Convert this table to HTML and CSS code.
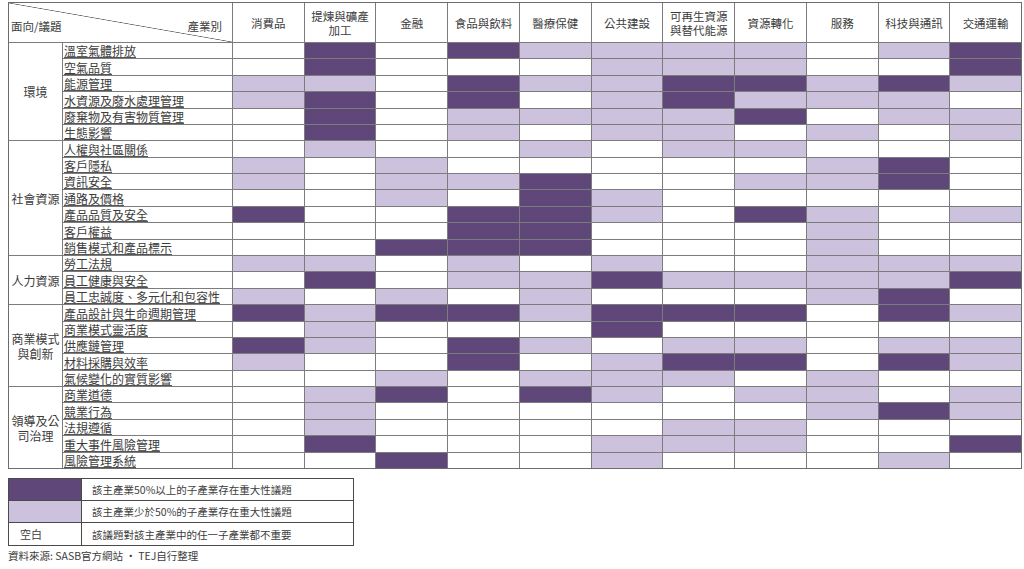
FILE: index.html
```html
<!DOCTYPE html>
<html lang="zh-Hant">
<head>
<meta charset="utf-8">
<title>SASB 重大性議題矩陣</title>
<link rel="stylesheet" href="styles.css">
</head>
<body>
<div class="page">
  <div class="matrix">
    <div class="corner"><span>面向/議題</span><span>產業別</span></div>
    <div class="h">消費品</div>
    <div class="h">提煉與礦產<br>加工</div>
    <div class="h">金融</div>
    <div class="h">食品與飲料</div>
    <div class="h">醫療保健</div>
    <div class="h">公共建設</div>
    <div class="h">可再生資源<br>與替代能源</div>
    <div class="h">資源轉化</div>
    <div class="h">服務</div>
    <div class="h">科技與通訊</div>
    <div class="h">交通運輸</div>

    <div class="cat span6">環境</div>
    <div class="t"><span>溫室氣體排放</span></div>
    <div class="w"></div><div class="d"></div><div class="w"></div><div class="d"></div><div class="l"></div><div class="l"></div><div class="l"></div><div class="l"></div><div class="w"></div><div class="l"></div><div class="d"></div>
    <div class="t"><span>空氣品質</span></div>
    <div class="w"></div><div class="d"></div><div class="w"></div><div class="w"></div><div class="w"></div><div class="l"></div><div class="l"></div><div class="l"></div><div class="w"></div><div class="w"></div><div class="d"></div>
    <div class="t"><span>能源管理</span></div>
    <div class="l"></div><div class="l"></div><div class="w"></div><div class="d"></div><div class="l"></div><div class="l"></div><div class="d"></div><div class="d"></div><div class="l"></div><div class="d"></div><div class="l"></div>
    <div class="t"><span>水資源及廢水處理管理</span></div>
    <div class="l"></div><div class="d"></div><div class="w"></div><div class="d"></div><div class="w"></div><div class="l"></div><div class="d"></div><div class="l"></div><div class="l"></div><div class="l"></div><div class="w"></div>
    <div class="t"><span>廢棄物及有害物質管理</span></div>
    <div class="w"></div><div class="d"></div><div class="w"></div><div class="l"></div><div class="l"></div><div class="l"></div><div class="l"></div><div class="d"></div><div class="w"></div><div class="l"></div><div class="l"></div>
    <div class="t"><span>生態影響</span></div>
    <div class="w"></div><div class="d"></div><div class="w"></div><div class="l"></div><div class="w"></div><div class="l"></div><div class="l"></div><div class="w"></div><div class="l"></div><div class="w"></div><div class="l"></div>

    <div class="cat span7">社會資源</div>
    <div class="t"><span>人權與社區關係</span></div>
    <div class="w"></div><div class="l"></div><div class="w"></div><div class="w"></div><div class="l"></div><div class="w"></div><div class="l"></div><div class="l"></div><div class="w"></div><div class="w"></div><div class="w"></div>
    <div class="t"><span>客戶隱私</span></div>
    <div class="l"></div><div class="w"></div><div class="l"></div><div class="w"></div><div class="w"></div><div class="w"></div><div class="w"></div><div class="w"></div><div class="l"></div><div class="d"></div><div class="w"></div>
    <div class="t"><span>資訊安全</span></div>
    <div class="l"></div><div class="w"></div><div class="l"></div><div class="l"></div><div class="d"></div><div class="w"></div><div class="w"></div><div class="l"></div><div class="l"></div><div class="d"></div><div class="w"></div>
    <div class="t"><span>通路及價格</span></div>
    <div class="w"></div><div class="w"></div><div class="l"></div><div class="w"></div><div class="d"></div><div class="l"></div><div class="w"></div><div class="w"></div><div class="w"></div><div class="w"></div><div class="w"></div>
    <div class="t"><span>產品品質及安全</span></div>
    <div class="d"></div><div class="w"></div><div class="w"></div><div class="d"></div><div class="d"></div><div class="l"></div><div class="w"></div><div class="d"></div><div class="l"></div><div class="w"></div><div class="l"></div>
    <div class="t"><span>客戶權益</span></div>
    <div class="w"></div><div class="w"></div><div class="w"></div><div class="d"></div><div class="d"></div><div class="w"></div><div class="w"></div><div class="w"></div><div class="l"></div><div class="w"></div><div class="w"></div>
    <div class="t"><span>銷售模式和產品標示</span></div>
    <div class="w"></div><div class="w"></div><div class="d"></div><div class="d"></div><div class="d"></div><div class="w"></div><div class="w"></div><div class="w"></div><div class="l"></div><div class="w"></div><div class="w"></div>

    <div class="cat span3">人力資源</div>
    <div class="t"><span>勞工法規</span></div>
    <div class="l"></div><div class="l"></div><div class="w"></div><div class="l"></div><div class="w"></div><div class="l"></div><div class="w"></div><div class="w"></div><div class="l"></div><div class="l"></div><div class="l"></div>
    <div class="t"><span>員工健康與安全</span></div>
    <div class="w"></div><div class="d"></div><div class="w"></div><div class="l"></div><div class="l"></div><div class="d"></div><div class="l"></div><div class="l"></div><div class="l"></div><div class="l"></div><div class="d"></div>
    <div class="t"><span>員工忠誠度、多元化和包容性</span></div>
    <div class="l"></div><div class="w"></div><div class="l"></div><div class="w"></div><div class="l"></div><div class="w"></div><div class="w"></div><div class="w"></div><div class="l"></div><div class="d"></div><div class="w"></div>

    <div class="cat span5">商業模式<br>與創新</div>
    <div class="t"><span>產品設計與生命週期管理</span></div>
    <div class="d"></div><div class="l"></div><div class="d"></div><div class="d"></div><div class="l"></div><div class="d"></div><div class="d"></div><div class="d"></div><div class="w"></div><div class="d"></div><div class="l"></div>
    <div class="t"><span>商業模式靈活度</span></div>
    <div class="w"></div><div class="l"></div><div class="w"></div><div class="w"></div><div class="w"></div><div class="d"></div><div class="w"></div><div class="w"></div><div class="w"></div><div class="w"></div><div class="w"></div>
    <div class="t"><span>供應鏈管理</span></div>
    <div class="d"></div><div class="l"></div><div class="w"></div><div class="d"></div><div class="l"></div><div class="w"></div><div class="l"></div><div class="l"></div><div class="w"></div><div class="l"></div><div class="l"></div>
    <div class="t"><span>材料採購與效率</span></div>
    <div class="l"></div><div class="w"></div><div class="w"></div><div class="d"></div><div class="w"></div><div class="l"></div><div class="d"></div><div class="d"></div><div class="w"></div><div class="d"></div><div class="l"></div>
    <div class="t"><span>氣候變化的實質影響</span></div>
    <div class="w"></div><div class="w"></div><div class="l"></div><div class="w"></div><div class="l"></div><div class="l"></div><div class="l"></div><div class="w"></div><div class="l"></div><div class="w"></div><div class="w"></div>

    <div class="cat span5">領導及公<br>司治理</div>
    <div class="t"><span>商業道德</span></div>
    <div class="w"></div><div class="l"></div><div class="d"></div><div class="w"></div><div class="d"></div><div class="l"></div><div class="w"></div><div class="l"></div><div class="l"></div><div class="w"></div><div class="l"></div>
    <div class="t"><span>競業行為</span></div>
    <div class="w"></div><div class="l"></div><div class="w"></div><div class="w"></div><div class="w"></div><div class="w"></div><div class="w"></div><div class="w"></div><div class="l"></div><div class="d"></div><div class="l"></div>
    <div class="t"><span>法規遵循</span></div>
    <div class="w"></div><div class="l"></div><div class="w"></div><div class="w"></div><div class="w"></div><div class="w"></div><div class="l"></div><div class="l"></div><div class="w"></div><div class="w"></div><div class="w"></div>
    <div class="t"><span>重大事件風險管理</span></div>
    <div class="w"></div><div class="d"></div><div class="w"></div><div class="w"></div><div class="w"></div><div class="l"></div><div class="l"></div><div class="l"></div><div class="w"></div><div class="w"></div><div class="d"></div>
    <div class="t"><span>風險管理系統</span></div>
    <div class="w"></div><div class="w"></div><div class="d"></div><div class="w"></div><div class="w"></div><div class="l"></div><div class="w"></div><div class="w"></div><div class="w"></div><div class="l"></div><div class="w"></div>
  </div>

  <div class="legend">
    <div class="d"></div>
    <div class="lt">該主產業50%以上的子產業存在重大性議題</div>
    <div class="l"></div>
    <div class="lt">該主產業少於50%的子產業存在重大性議題</div>
    <div class="lk">空白</div>
    <div class="lt">該議題對該主產業中的任一子產業都不重要</div>
  </div>

  <div class="source">資料來源: SASB官方網站 · TEJ自行整理</div>
</div>
</body>
</html>
```

FILE: styles.css
```css
* { box-sizing: border-box; }

html, body {
  margin: 0;
  padding: 0;
  background: #ffffff;
}

body {
  font-family: "Noto Sans CJK TC", "Noto Sans CJK SC", "Noto Sans", sans-serif;
  color: #3c3c3c;
}

.page {
  padding: 2px 0 0 8px;
}

.matrix {
  display: grid;
  grid-template-columns: 53px 169px repeat(11, 1fr);
  grid-template-rows: 39px repeat(26, 1fr);
  gap: 1px;
  width: 1014px;
  height: 467px;
  background: #7c7c7c;
  border: 1px solid #6c6c6c;
}

.w { background: #ffffff; }
.d { background: #5f4779; }
.l { background: #cdc2dd; }

.corner {
  grid-column: span 2;
  display: flex;
  justify-content: space-between;
  align-items: center;
  padding: 6px 10px 0 2px;
  font-size: 11.5px;
  background: linear-gradient(to top right, #ffffff calc(50% - 0.7px), #666666 50%, #ffffff calc(50% + 0.7px));
}

.h {
  display: flex;
  align-items: center;
  justify-content: center;
  text-align: center;
  font-size: 11.5px;
  line-height: 14px;
  background: #ffffff;
  padding-top: 1px;
}

.cat {
  display: flex;
  align-items: center;
  justify-content: center;
  text-align: center;
  font-size: 12px;
  line-height: 15px;
  background: #ffffff;
}

.span3 { grid-row: span 3; }
.span5 { grid-row: span 5; }
.span6 { grid-row: span 6; }
.span7 { grid-row: span 7; }

.t {
  display: flex;
  align-items: flex-end;
  background: #ffffff;
  font-size: 12px;
  line-height: 14px;
  white-space: nowrap;
  overflow: hidden;
  padding-left: 1px;
}

.t span {
  text-decoration: underline;
  text-decoration-color: #555555;
  text-underline-offset: 1px;
}

.legend {
  display: grid;
  grid-template-columns: 72px 1fr;
  grid-template-rows: 21px 21px 22px;
  gap: 1px;
  width: 346px;
  margin-top: 9px;
  background: #4a4a4a;
  border: 1px solid #4a4a4a;
}

.lt, .lk {
  display: flex;
  align-items: center;
  background: #ffffff;
  font-size: 10.5px;
  white-space: nowrap;
}

.lt { padding-left: 10px; }
.lk { padding-left: 11px; font-size: 11px; }

.source {
  margin-top: 3px;
  font-size: 10.5px;
  line-height: 14px;
}
```
